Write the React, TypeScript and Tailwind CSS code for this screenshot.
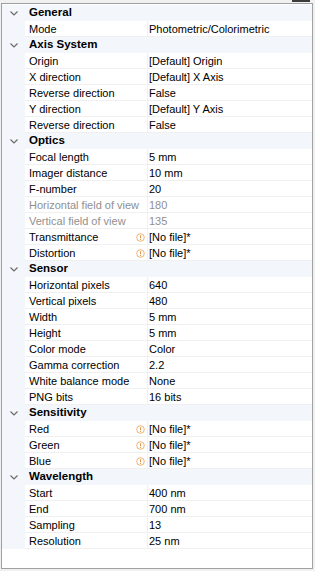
import React from "react"

type Prop = { name: string; value: string; disabled?: boolean; warn?: boolean }
type Category = { title: string; props: Prop[] }

const categories: Category[] = [
  { title: "General", props: [{ name: "Mode", value: "Photometric/Colorimetric" }] },
  {
    title: "Axis System",
    props: [
      { name: "Origin", value: "[Default] Origin" },
      { name: "X direction", value: "[Default] X Axis" },
      { name: "Reverse direction", value: "False" },
      { name: "Y direction", value: "[Default] Y Axis" },
      { name: "Reverse direction", value: "False" },
    ],
  },
  {
    title: "Optics",
    props: [
      { name: "Focal length", value: "5 mm" },
      { name: "Imager distance", value: "10 mm" },
      { name: "F-number", value: "20" },
      { name: "Horizontal field of view", value: "180", disabled: true },
      { name: "Vertical field of view", value: "135", disabled: true },
      { name: "Transmittance", value: "[No file]*", warn: true },
      { name: "Distortion", value: "[No file]*", warn: true },
    ],
  },
  {
    title: "Sensor",
    props: [
      { name: "Horizontal pixels", value: "640" },
      { name: "Vertical pixels", value: "480" },
      { name: "Width", value: "5 mm" },
      { name: "Height", value: "5 mm" },
      { name: "Color mode", value: "Color" },
      { name: "Gamma correction", value: "2.2" },
      { name: "White balance mode", value: "None" },
      { name: "PNG bits", value: "16 bits" },
    ],
  },
  {
    title: "Sensitivity",
    props: [
      { name: "Red", value: "[No file]*", warn: true },
      { name: "Green", value: "[No file]*", warn: true },
      { name: "Blue", value: "[No file]*", warn: true },
    ],
  },
  {
    title: "Wavelength",
    props: [
      { name: "Start", value: "400 nm" },
      { name: "End", value: "700 nm" },
      { name: "Sampling", value: "13" },
      { name: "Resolution", value: "25 nm" },
    ],
  },
]

function Chevron() {
  return (
    <svg width="8" height="5" viewBox="0 0 8 5" className="block">
      <polyline points="0.5,0.5 4,4 7.5,0.5" fill="none" stroke="#6b6b6b" strokeWidth="1.2" />
    </svg>
  )
}

function Warn() {
  return (
    <svg width="9" height="9" viewBox="0 0 9 9" className="block">
      <circle cx="4.5" cy="4.5" r="3.8" fill="none" stroke="#f0b070" strokeWidth="1" />
      <line x1="4.5" y1="2.2" x2="4.5" y2="5.2" stroke="#e39a4e" strokeWidth="1" />
      <line x1="4.5" y1="6" x2="4.5" y2="7" stroke="#e39a4e" strokeWidth="1" />
    </svg>
  )
}

export default function App() {
  return (
    <div
      className="relative w-[315px] h-[571px] bg-[#f0f0f0] pt-[3px] pl-[1px] text-[11px] text-black"
      style={{ fontFamily: '"Liberation Sans", Arial, sans-serif' }}
    >
      <div className="absolute top-0 right-[5px] w-[18px] h-[2px] bg-[#3c3c3c]" />
      <div className="w-[312px] h-[566px] border border-[#a0a0a0] bg-white pt-[1px]">
        {categories.map((cat) => (
          <div key={cat.title}>
            {/* Category header */}
            <div className="flex h-[16px] items-center bg-[#f3f6fb] border-b border-[#f3f6fb] pt-[1px]">
              <div className="w-[23px] flex justify-center pl-[1px]">
                <Chevron />
              </div>
              <span className="pl-[4px] font-bold text-[11.5px]">{cat.title}</span>
            </div>
            {cat.props.map((p, i) => (
              <div key={i} className="flex h-[16px]">
                <div className="w-[23px] bg-[#f3f6fb]" />
                <div className="flex flex-1 border-b border-[#f0f0f0]">
                  <div
                    className={`w-[123px] flex items-center justify-between pl-[4px] pr-[2px] pt-[1px] border-r border-[#f0f0f0] ${
                      p.disabled ? "text-[#909090]" : ""
                    }`}
                  >
                    <span className="whitespace-nowrap">{p.name}</span>
                    {p.warn && <Warn />}
                  </div>
                  <div className={`flex-1 flex items-center pl-[1px] pt-[1px] whitespace-nowrap ${p.disabled ? "text-[#909090]" : ""}`}>
                    {p.value}
                  </div>
                </div>
              </div>
            ))}
          </div>
        ))}
      </div>
    </div>
  )
}
